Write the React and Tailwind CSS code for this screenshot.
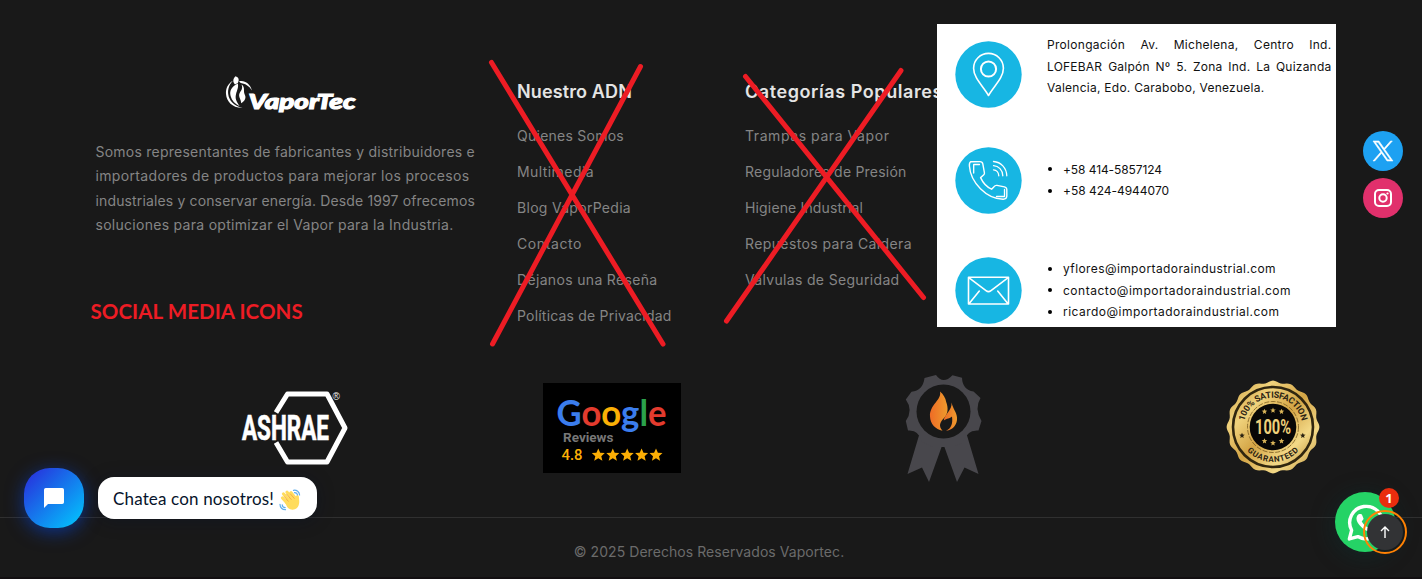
const aboutLines = [
  { text: "Somos representantes de fabricantes y distribuidores e", cls: "tracking-[0.24px]" },
  { text: "importadores de productos para mejorar los procesos", cls: "tracking-[0.344px]" },
  { text: "industriales y conservar energía. Desde 1997 ofrecemos", cls: "tracking-[0.141px]" },
  { text: "soluciones para optimizar el Vapor para la Industria.", cls: "tracking-[0.284px]" },
];

const adnLinks = [
  { text: "Quienes Somos", cls: "tracking-[0.252px]" },
  { text: "Multimedia", cls: "tracking-[0.426px]" },
  { text: "Blog VaporPedia", cls: "tracking-[0.294px]" },
  { text: "Contacto", cls: "tracking-[0.595px]" },
  { text: "Déjanos una Reseña", cls: "tracking-[0.333px]" },
  { text: "Políticas de Privacidad", cls: "tracking-[0.201px]" },
];

const categoryLinks = [
  { text: "Trampas para Vapor", cls: "tracking-[0.571px]" },
  { text: "Reguladores de Presión", cls: "tracking-[0.212px]" },
  { text: "Higiene Industrial", cls: "tracking-[0.151px]" },
  { text: "Repuestos para Caldera", cls: "tracking-[0.386px]" },
  { text: "Válvulas de Seguridad", cls: "tracking-[0.33px]" },
];

const phones = [
  { text: "+58 414-5857124", cls: "tracking-[-0.085px]" },
  { text: "+58 424-4944070", cls: "tracking-[-0.026px]" },
];

const emails = [
  { text: "yflores@importadoraindustrial.com", cls: "tracking-[0.398px]" },
  { text: "contacto@importadoraindustrial.com", cls: "tracking-[0.515px]" },
  { text: "ricardo@importadoraindustrial.com", cls: "tracking-[0.472px]" },
];

function VaporTecLogo() {
  return (
    <svg className="block h-[40px] w-[134px]" viewBox="0 0 134 40" fill="#fff">
      <path d="M10.5 1.2C13.5 2 14.6 4.6 12.8 8L10 9.5C7.6 7 7.8 3.6 10.5 1.2Z" />
      <path d="M8 5.8C3 8.5 .6 13.5 1 19C1.5 26.5 7.5 33.2 17.5 32.8C8.5 30.8 4 25.5 3.2 19C2.7 14 4.4 9 8 5.8Z" />
      <path d="M12.8 8.6C6.5 11.5 4.3 16 5.6 21C6.8 25.5 9.8 29 14.8 31.2C11 26.5 10 23 11 19.3C12 15.3 13.8 12.6 12.8 8.6Z" />
      <path d="M16.5 9.5C18.8 14.5 14.2 16.7 14.1 20.3C14 23 16 24.6 16.2 28.2C20.2 25.6 21.4 22.4 19.7 19.4C18 16 20.6 12.2 16.5 9.5Z" />
      <path d="M14 6.2C19.5 4.8 25.2 8.6 27 15.4C23.9 11.2 21.4 9.4 17.8 8.6C16.5 8.3 15 7.8 14 6.2Z" />
      <text
        x="23.5"
        y="34.2"
        textLength="107"
        lengthAdjust="spacingAndGlyphs"
        fontFamily="Lato, sans-serif"
        fontWeight="900"
        fontStyle="italic"
        fontSize="21.5"
        stroke="#fff"
        strokeWidth="1.1"
      >
        VaporTec
      </text>
    </svg>
  );
}

function LinkColumn({ title, titleCls, links, className }) {
  return (
    <nav className={`shrink-0 pt-[78px] whitespace-nowrap ${className}`}>
      <h3 className={`h-7 text-[18px] leading-7 font-semibold text-[#e4e4e4] ${titleCls}`}>{title}</h3>
      <ul className="mt-[12px] text-[14px] text-[#858585]">
        {links.map((l) => (
          <li key={l.text} className={`h-9 leading-9 ${l.cls}`}>{l.text}</li>
        ))}
      </ul>
    </nav>
  );
}

function Disc({ children }) {
  return (
    <svg className="block size-[67px] shrink-0" viewBox="0 0 67 67" fill="none" stroke="#fff" strokeWidth="1.6" strokeLinejoin="round" strokeLinecap="round">
      <circle cx="33.5" cy="33.5" r="33.2" fill="#17b6e3" stroke="none" />
      {children}
    </svg>
  );
}

function ContactList({ items }) {
  return (
    <ul className="whitespace-nowrap">
      {items.map((i) => (
        <li key={i.text} className={`flex h-[21.5px] items-center ${i.cls}`}>
          <span className="mr-[11px] ml-px size-[4px] rounded-full bg-black" />
          {i.text}
        </li>
      ))}
    </ul>
  );
}

function ContactPanel() {
  return (
    <section className="relative mt-6 flex h-[303px] w-[399px] shrink-0 bg-white text-[12px] text-[#111]">
      <div className="flex w-[110px] shrink-0 flex-col pl-[18px]">
        <div className="h-[106px] pt-[17px]">
          <Disc>
            <path d="M33.5 54.5C28 45 18.6 37 18.6 27.3A14.9 14.9 0 0 1 48.4 27.3C48.4 37 39 45 33.5 54.5Z" />
            <circle cx="33.5" cy="28" r="7.6" strokeWidth="2" />
          </Disc>
        </div>
        <div className="h-[110px] pt-[17px]">
          <Disc>
            <path strokeWidth="1.4" d="M15.5 14.8Q14.2 15.5 14.4 19C15.5 35.5 31.5 51.8 48.2 52.2Q51.6 52.2 51.8 49.3V42.6Q51.8 40.4 49.4 39.9L42 38.4Q40.2 38.1 39 39.7L36.6 42.2C31.5 39.8 27.8 35.6 25.6 30.6L28.8 27.8Q29.7 27 29.4 25.6L27.8 16.8Q27.4 14.6 25 14.6Z" />
            <path strokeWidth="1.3" d="M18.7 26V17.5H24.5M41.5 49.5H49.5V42.5M38.5 14.5C46 15 51.5 21 51.8 28.8M38.5 18.6C43.7 19 47.6 23 47.8 28.8M38.5 22.8C41.5 23 43.7 25.500 43.8 28.800" />
          </Disc>
        </div>
        <div className="pt-[17px]">
          <Disc>
            <path d="M13.5 20.3H53.5V47H13.5ZM13.8 20.6L31 33.6Q33.5 35.6 36 33.6L53.2 20.6M24.3 34L14.2 46.4M42.7 34L52.8 46.4" />
          </Disc>
        </div>
      </div>
      <div className="flex w-[284.5px] flex-col pt-[10px] leading-[21.5px]">
        <address className="h-[124.5px] whitespace-nowrap not-italic">
          <p className="flex justify-between tracking-[0.3px]">
            <span>Prolongación</span> <span>Av.</span> <span>Michelena,</span> <span>Centro</span> <span>Ind.</span>
          </p>
          <p className="flex justify-between tracking-[0.22px]">
            <span>LOFEBAR</span> <span>Galpón</span> <span>Nº</span> <span>5.</span> <span>Zona</span> <span>Ind.</span> <span>La</span> <span>Quizanda</span>
          </p>
          <p className="tracking-[0.26px]">Valencia, Edo. Carabobo, Venezuela.</p>
        </address>
        <div className="h-[99.5px]">
          <ContactList items={phones} />
        </div>
        <ContactList items={emails} />
      </div>
    </section>
  );
}

function CrossOut() {
  return (
    <svg className="pointer-events-none absolute top-0 left-0 h-[374px] w-[937px]" viewBox="0 0 937 374" stroke="#ed1c24" strokeWidth="5" strokeLinecap="round">
      <path d="M491.5 62.5L663 344M640.5 66.5L492.5 344M745.5 76.5L923.5 297.5M901 70.5L726.5 321" />
    </svg>
  );
}

function AshraeLogo() {
  return (
    <svg className="block h-[80px] w-[110px]" viewBox="0 0 110 80">
      <path d="M36 24.500L47.500 6H87L105 40L87 74H47.500L36 54.500" fill="none" stroke="#fff" strokeWidth="5" strokeLinejoin="round" />
      <text x="2" y="52" textLength="87" lengthAdjust="spacingAndGlyphs" fontFamily="Roboto, sans-serif" fontWeight="700" fontSize="34.5" fill="#fff" stroke="#fff" strokeWidth="0.7">
        ASHRAE
      </text>
      <text x="92.5" y="11.500" fontFamily="Liberation Sans, sans-serif" fontSize="10" fill="#eee">®</text>
    </svg>
  );
}

const starPath = "M0-6.6L1.9-2.3L6.5-1.9L3 1.2L4.1 5.8L0 3.3L-4.1 5.8L-3 1.2L-6.5-1.9L-1.9-2.3Z";

function GoogleReviews() {
  return (
    <svg className="block h-[90px] w-[138px] bg-black" viewBox="0 0 138 90">
      <text x="13.500" y="42.500" textLength="110" lengthAdjust="spacingAndGlyphs" fontFamily="Lato, sans-serif" fontWeight="700" fontSize="36">
        <tspan fill="#3b7ded">G</tspan>
        <tspan fill="#e33b2e">o</tspan>
        <tspan fill="#fbb006">o</tspan>
        <tspan fill="#3b7ded">g</tspan>
        <tspan fill="#2ba24c">l</tspan>
        <tspan fill="#e33b2e">e</tspan>
      </text>
      <text x="20" y="58.7" textLength="50.5" lengthAdjust="spacingAndGlyphs" fontFamily="Roboto, sans-serif" fontWeight="700" fontSize="12.5" fill="#777">
        Reviews
      </text>
      <text x="18.5" y="77" textLength="21" lengthAdjust="spacingAndGlyphs" fontFamily="Roboto, sans-serif" fontWeight="500" fontSize="15" fill="#fbb006">
        4.8
      </text>
      {[55.3, 69.8, 84.2, 98.6, 113].map((x) => (
        <path key={x} d={starPath} transform={`translate(${x} 72)`} fill="#fbae05" />
      ))}
    </svg>
  );
}

function FlameRibbon() {
  return (
    <svg className="-mt-px block h-[110px] w-[78px]" viewBox="0 0 78 110">
      <g fill="#48474c">
        <path d="M18 49L2.5 101L17 94.5L24 109L38 70L52 109L59.500 94.500L73.500 101L58 49Z" />
        <path d="M29 2.500L31 2Q38 12 47.500 2.200L57 4.800Q57.500 17 68.500 18.500L75.500 25Q69 35.500 76.500 48L73.500 57.500Q62 56.500 58 69L49 74H28L17 69Q14 56.500 3 57.500L.8 48Q8.500 37 .8 26.500L6.500 18.800Q18 17.500 19.500 5Z" />
      </g>
      <circle cx="38.500" cy="38.500" r="27" fill="#191919" />
      <defs>
        <linearGradient id="flame" x1="0" x2="1">
          <stop offset="0" stopColor="#ee6c26" />
          <stop offset="1" stopColor="#ee9b2d" />
        </linearGradient>
      </defs>
      <path fill="url(#flame)" d="M35 18.500C37 27 24.500 31.500 25 43.500C25.300 51.500 30.500 56 37.500 57.800C33.500 53 34.500 49.500 39.500 44.500C43 40.500 43.500 35 41.200 29C40.500 25 38.500 21.500 35 18.500Z" />
      <path fill="url(#flame)" d="M46.500 29.500C47.500 37 39 42 38.800 47.500C42 45 44.500 46 47 43.500C48 51 46 55.500 41 57.800C48.500 57 52.500 51 52 44.500C51.600 39 48 36 46.500 29.500Z" />
    </svg>
  );
}

function GuaranteeSeal() {
  const cx = 47;
  const scallop =
    Array.from({ length: 144 }, (_, i) => {
      const a = (i / 144) * Math.PI * 2;
      const r = 45.3 + 1.1 * Math.cos(a * 16);
      return `${i ? "L" : "M"}${(cx + r * Math.sin(a)).toFixed(2)} ${(cx - r * Math.cos(a)).toFixed(2)}`;
    }).join("") + "Z";
  const star = "M0-2.800L.8-.9L2.800-.8L1.200.5L1.700 2.500L0 1.400L-1.700 2.500L-1.200.5L-2.800-.8L-.8-.9Z";
  return (
    <svg className="-ml-px block size-[94px]" viewBox="0 0 94 94" fontFamily="Roboto, sans-serif" fontWeight="700">
      <defs>
        <linearGradient id="gold" x1="0" y1="0" x2="1" y2="1">
          <stop offset="0" stopColor="#c89b3c" />
          <stop offset=".25" stopColor="#f0d27c" />
          <stop offset=".5" stopColor="#d3a445" />
          <stop offset=".75" stopColor="#f3d987" />
          <stop offset="1" stopColor="#b98a31" />
        </linearGradient>
        <path id="arc-top" d="M17.700 47A29.300 29.300 0 0 1 76.300 47" />
        <path id="arc-bottom" d="M12 47A35 35 0 0 0 82 47" />
      </defs>
      <path d={scallop} fill="url(#gold)" />
      <circle cx="47" cy="47" r="40" fill="url(#gold)" stroke="#30260f" strokeWidth="2.600" />
      <circle cx="47" cy="47" r="25.500" fill="none" stroke="#7a5c20" strokeWidth=".8" strokeDasharray="5 1.500" />
      <circle cx="47" cy="47" r="23.300" fill="#080706" />
      <text fontSize="8.800" fill="#2a2212" textAnchor="middle">
        <textPath href="#arc-top" startOffset="50%" textLength="80">100% SATISFACTION</textPath>
      </text>
      <text fontSize="8" fill="#2a2212" textAnchor="middle">
        <textPath href="#arc-bottom" startOffset="50%" textLength="58">GUARANTEED</textPath>
      </text>
      <text x="29" y="53.500" textLength="36" lengthAdjust="spacingAndGlyphs" fontSize="20" fill="#efd07a">100%</text>
      {[[38.500, 31.500], [47, 30.300], [55.500, 31.500], [38.500, 61], [47, 63], [55.500, 61]].map(([x, y]) => (
        <path key={`${x}-${y}`} d={star} transform={`translate(${x} ${y})`} fill="#d9b458" />
      ))}
      <path d={star} transform="translate(16 55.500)" fill="#2a2212" />
      <path d={star} transform="translate(76.800 55.500)" fill="#2a2212" />
    </svg>
  );
}

function WavingHand() {
  return (
    <svg className="block size-[22px]" viewBox="0 0 22 22">
      <g fill="none" stroke="#ffdc5d" strokeWidth="3.200" strokeLinecap="round">
        <path d="M3.500 9L9 15M4.500 5L12 13M8 3.200L15 11.500M12 3.800L17 10" />
      </g>
      <path fill="#ffdc5d" d="M5 11.500L13 6.500L17 10.500C16.800 8.500 16.800 6.500 18 6C19.600 5.600 20 7.200 20 9C20.200 12 20.800 15 18.800 18C16 21.700 11 21.500 8.200 18Z" />
      <path d="M5.200 7.500L9.500 12.500M7.400 5L12.500 10.800M11.200 4.700L15.500 9.700" fill="none" stroke="#ef9645" strokeWidth=".7" />
      <path d="M14.500 1.300C17.800.8 20.300 3 20.600 6M15.500 3.600C17 3.500 18.200 4.500 18.500 6M1 15.300C1 18.600 3.200 20.800 6.500 20.700M3.200 15.800C3.300 17.500 4.500 18.600 6.200 18.600" fill="none" stroke="#5dadec" strokeWidth="1.200" strokeLinecap="round" />
    </svg>
  );
}

function ChatWidget() {
  return (
    <div className="absolute top-[468px] left-6 flex items-start">
      <button className="flex size-[60px] items-center justify-center rounded-[26px] bg-linear-[135deg] from-[#2a27da] to-[#00ccff] shadow-[0_4px_18px_rgba(0,77,255,0.5)]">
        <svg className="size-5" viewBox="0 0 20 20" fill="#fff">
          <path d="M1.800 0H18.200Q20 0 20 1.800V14.200Q20 16 18.200 16H4L0 20V1.800Q0 0 1.800 0Z" />
        </svg>
      </button>
      <div className="mt-[9px] ml-[14px] flex h-[42px] w-[219px] items-center rounded-[16px] bg-white pl-[15px] shadow-[0_2px_18px_rgba(0,18,46,0.3)]">
        <span className="w-[166px] pt-px font-['Lato',sans-serif] text-[17px] tracking-[0.153px] whitespace-nowrap text-[#06132b]">Chatea con nosotros!</span>
        <div className="pt-[3px]">
          <WavingHand />
        </div>
      </div>
    </div>
  );
}

function SocialButtons() {
  return (
    <div className="absolute top-[130.5px] left-[1363px] flex flex-col gap-[7px]">
      <a className="flex size-10 items-center justify-center rounded-full bg-[#1da1f2]">
        <svg className="size-5 overflow-visible" viewBox="0 0 24 24" fill="#fff" stroke="#fff" strokeWidth=".7">
          <path d="M14.258 10.152 23.176 0h-2.113l-7.747 8.813L7.133 0H0l9.352 13.328L0 23.973h2.113l8.176-9.309 6.531 9.309h7.133zm-2.895 3.293-.949-1.328L2.875 1.560h3.246l6.086 8.523.945 1.328 7.910 11.078h-3.246z" />
        </svg>
      </a>
      <a className="flex size-10 items-center justify-center rounded-full bg-[#e1306c]">
        <svg className="size-[18px]" viewBox="0 0 18 18" fill="none" stroke="#fff" strokeWidth="2">
          <rect x="1" y="1" width="16" height="16" rx="4" />
          <circle cx="9" cy="9" r="3.700" />
          <circle cx="13.500" cy="4.500" r="1.100" fill="#fff" stroke="none" />
        </svg>
      </a>
    </div>
  );
}

function FloatingActions() {
  return (
    <div className="absolute top-[487px] left-[1335px] h-[68px] w-[74px]">
      <div className="absolute top-[5px] left-0 flex size-[60px] items-center justify-center rounded-full bg-[#25d366] shadow-[0_4px_24px_rgba(10,60,60,0.4)]">
        <svg className="size-[37px]" viewBox="0 0 36 36">
          <path d="M2.300 34L4.500 25.500A16 15.800 0 1 1 10.500 31.700Z" fill="none" stroke="#fff" strokeWidth="3.300" strokeLinejoin="round" />
          <path fill="#fff" d="M12 9.700H13.500Q14.300 9.700 14.700 10.600L16 13.800Q16.300 14.500 15.800 15.200L14.300 17C16 20 18.300 22 21.300 23.200L23.200 21Q23.700 20.400 24.400 20.700L28 22.500C28.500 25.500 25.500 27.700 22.700 27.200C16.500 26.200 9.300 19 9.200 14.300C9.200 12 10.500 10 12 9.700Z" />
        </svg>
      </div>
      <div className="absolute top-[23px] left-[28px] flex size-[44px] items-center justify-center rounded-full border-2 border-[#ff8204]">
        <div className="flex size-[36px] items-center justify-center rounded-full bg-[#323335]">
          <svg className="h-3 w-[10px]" viewBox="0 0 10 12" fill="none" stroke="#fff" strokeWidth="1.400">
            <path d="M5 12V1M1 5L5 1L9 5" />
          </svg>
        </div>
      </div>
      <span className="absolute top-px left-[44px] flex size-5 items-center justify-center rounded-full bg-[#e92d0e] font-['Open_Sans',sans-serif] text-[13px] leading-none font-bold text-white">1</span>
    </div>
  );
}

export default function App() {
  return (
    <footer className="relative flex h-[579px] w-[1422px] flex-col overflow-hidden border-b-2 border-[#120f11] bg-[#191919] font-['Inter',sans-serif]">
      <div className="flex h-[374px] shrink-0">
        <section className="w-[517px] shrink-0 pt-[75px] pl-[95.500px] whitespace-nowrap">
          <div className="pl-[129px]">
            <VaporTecLogo />
          </div>
          <p className="mt-[25px] text-[14px] leading-[24.300px] text-[#858585]">
            {aboutLines.map((l) => (
              <span key={l.text} className={`block ${l.cls}`}>{l.text}</span>
            ))}
          </p>
          <p className="mt-[60px] -ml-[5px] font-['Lato',sans-serif] text-[20.500px] leading-7 font-bold tracking-[0.070px] text-[#ed1c24]">SOCIAL MEDIA ICONS</p>
        </section>
        <LinkColumn title="Nuestro ADN" titleCls="tracking-[0.129px]" links={adnLinks} className="w-[228px]" />
        <LinkColumn title="Categorías Populares" titleCls="tracking-[0.577px]" links={categoryLinks} className="w-[192px]" />
        <ContactPanel />
      </div>
      <div className="flex h-[143px] shrink-0 items-start">
        <div className="ml-[240px] pt-[14px]">
          <AshraeLogo />
        </div>
        <div className="ml-[193px] pt-[9px]">
          <GoogleReviews />
        </div>
        <div className="ml-[224px]">
          <FlameRibbon />
        </div>
        <div className="ml-[244px] pt-[6px]">
          <GuaranteeSeal />
        </div>
      </div>
      <p className="h-[60px] shrink-0 border-t border-[#303030] pt-[22px] text-center text-[14px] leading-6 tracking-[0.058px] text-[#6b6b6b]">
        <span className="mr-[4px]">© 2025 Derechos Reservados Vaportec.</span>
      </p>
      <CrossOut />
      <SocialButtons />
      <ChatWidget />
      <FloatingActions />
    </footer>
  );
}
